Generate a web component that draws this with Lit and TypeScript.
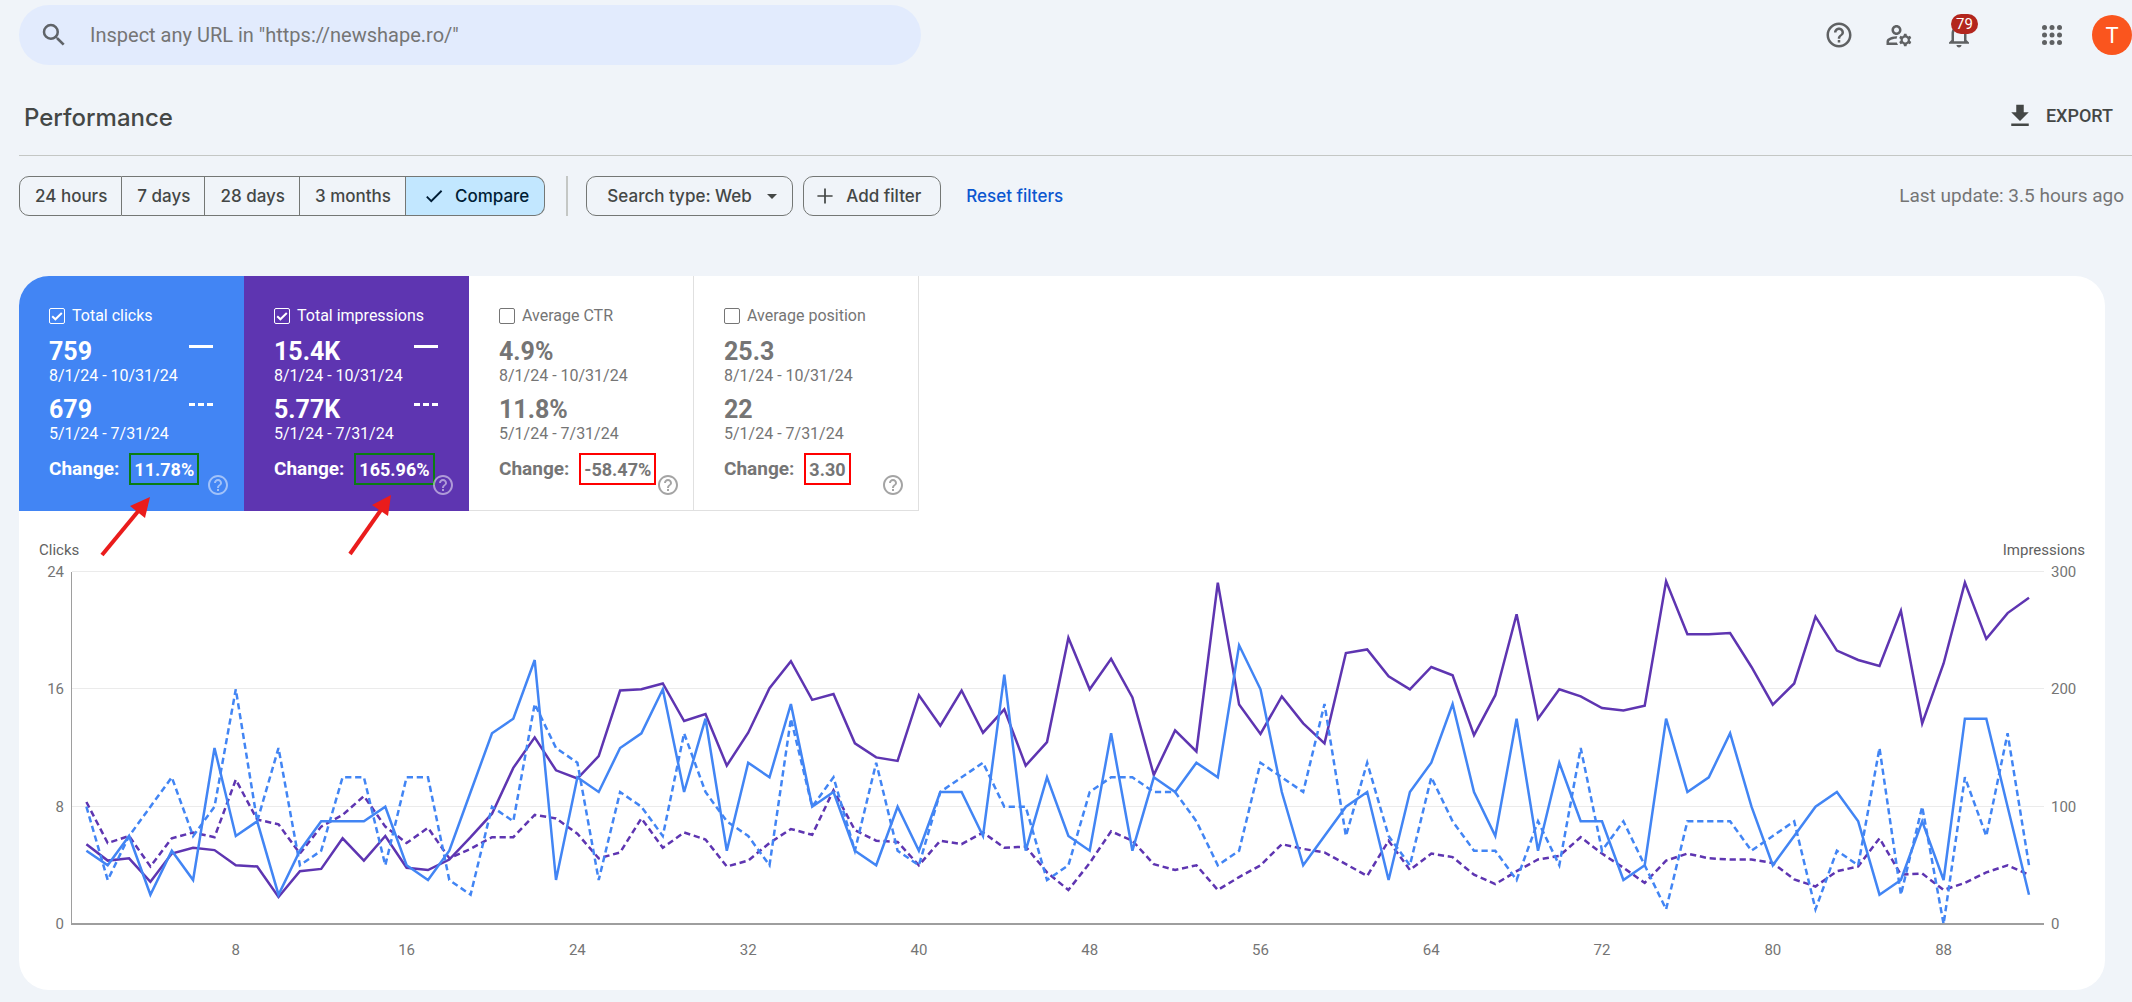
import { LitElement, html, svg, css, nothing } from "lit";
import { customElement, property } from "lit/decorators.js";
import { classMap } from "lit/directives/class-map.js";

const CLICKS = [
  5, 4, 6, 2, 5, 3, 12, 6, 7, 2, 5, 7, 7, 7, 8, 4, 3, 5, 9, 13, 14, 18, 3, 10, 9, 12, 13, 16, 9, 14, 5, 11, 10, 15,
  8, 9, 5, 4, 8, 5, 9, 9, 6, 17, 5, 10, 6, 5, 13, 5, 10, 9, 11, 10, 19, 16, 9, 4, 6, 8, 9, 3, 9, 11, 15, 9, 6, 14,
  5, 11, 7, 7, 3, 4, 14, 9, 10, 13, 8, 4, 6, 8, 9, 7, 2, 3, 7, 3, 14, 14, 8, 2,
];
const CLICKS_PREV = [
  8, 3, 6, 8, 10, 6, 8, 16, 7, 12, 4, 5, 10, 10, 4, 10, 10, 3, 2, 8, 7, 15, 12, 11, 3, 9, 8, 6, 13, 9, 7, 6, 4, 14,
  8, 10, 5, 11, 5, 4, 9, 10, 11, 8, 8, 3, 4, 9, 10, 10, 9, 9, 7, 4, 5, 11, 10, 9, 15, 6, 11, 6, 4, 10, 7, 5, 5, 3,
  7, 4, 12, 5, 7, 4, 1, 7, 7, 7, 5, 6, 7, 1, 5, 4, 12, 2, 8, 0, 10, 6, 13, 4,
];
const IMPRESSIONS = [
  68, 54, 56, 36, 60, 65, 63, 50, 49, 23, 45, 47, 73, 54, 75, 48, 46, 55, 74, 94, 133, 159, 131, 124, 143, 199, 200,
  205, 173, 179, 135, 163, 201, 224, 191, 196, 154, 142, 139, 195, 169, 199, 163, 183, 135, 155, 244, 200, 226, 193,
  127, 165, 147, 291, 187, 162, 194, 171, 154, 231, 234, 211, 200, 219, 212, 161, 195, 264, 175, 200, 194, 184, 182,
  186, 292, 247, 247, 248, 219, 187, 205, 262, 233, 225, 220, 267, 171, 222, 291, 243, 265, 278,
];
const IMPRESSIONS_PREV = [
  104, 69, 75, 49, 73, 78, 74, 123, 89, 85, 60, 83, 93, 109, 83, 69, 82, 56, 64, 74, 74, 93, 90, 77, 56, 61, 90, 65,
  78, 72, 49, 54, 69, 81, 76, 114, 80, 71, 70, 50, 71, 68, 78, 65, 66, 44, 29, 52, 79, 71, 51, 46, 50, 29, 40, 50,
  68, 64, 61, 51, 41, 71, 46, 60, 57, 42, 34, 45, 55, 58, 74, 60, 48, 35, 54, 60, 56, 55, 55, 52, 38, 32, 45, 49,
  73, 42, 43, 29, 35, 44, 50, 42,
];

const icon = (size: number, body: unknown, cls = "") =>
  html`<svg class=${cls} width=${size} height=${size} viewBox="0 0 24 24" fill="currentColor" aria-hidden="true">${body}</svg>`;

const ICONS = {
  search: svg`<path d="M15.5 14h-.79l-.28-.27A6.47 6.47 0 0 0 16 9.5 6.5 6.5 0 1 0 9.5 16c1.61 0 3.09-.59 4.23-1.57l.27.28v.79l5 4.99L20.49 19l-4.99-5zm-6 0a4.5 4.5 0 1 1 0-9 4.5 4.5 0 0 1 0 9z"/>`,
  help: svg`<path d="M11 18h2v-2h-2v2zm1-16C6.48 2 2 6.48 2 12s4.48 10 10 10 10-4.48 10-10S17.52 2 12 2zm0 18c-4.41 0-8-3.59-8-8s3.59-8 8-8 8 3.59 8 8-3.59 8-8 8zm0-14c-2.21 0-4 1.79-4 4h2c0-1.1.9-2 2-2s2 .9 2 2c0 2-3 1.75-3 5h2c0-2.250 3-2.500 3-5 0-2.210-1.790-4-4-4z"/>`,
  manage: svg`<path d="M4 18v-.65c0-.34.16-.66.41-.81C6.100 15.530 8.030 15 10 15c.03 0 .05 0 .08.01.1-.7.3-1.370.59-1.980-.22-.02-.44-.03-.67-.03-2.420 0-4.680.67-6.610 1.820-.88.52-1.390 1.500-1.390 2.530V20h9.260c-.42-.6-.75-1.280-.97-2H4zM10 12c2.210 0 4-1.790 4-4s-1.790-4-4-4-4 1.790-4 4 1.790 4 4 4zm0-6c1.100 0 2 .9 2 2s-.9 2-2 2-2-.9-2-2 .9-2 2-2zM20.750 16c0-.22-.03-.42-.06-.63l1.140-1.010-1-1.730-1.450.49c-.32-.27-.68-.48-1.080-.63L18 11h-2l-.3 1.490c-.4.150-.76.36-1.080.63l-1.450-.49-1 1.730 1.140 1.010c-.03.21-.06.41-.06.63s.03.42.06.63l-1.140 1.010 1 1.730 1.450-.49c.32.27.68.48 1.080.63L16 21h2l.3-1.490c.4-.150.76-.36 1.080-.63l1.450.49 1-1.730-1.140-1.010c.03-.21.06-.41.06-.63zM17 18c-1.100 0-2-.9-2-2s.9-2 2-2 2 .9 2 2-.9 2-2 2z"/>`,
  bell: svg`<path d="M12 22c1.100 0 2-.9 2-2h-4c0 1.100.9 2 2 2zm6-6v-5c0-3.070-1.630-5.640-4.500-6.320V4c0-.83-.67-1.500-1.500-1.500s-1.500.67-1.500 1.500v.68C7.640 5.360 6 7.920 6 11v5l-2 2v1h16v-1l-2-2zm-2 1H8v-6c0-2.480 1.510-4.500 4-4.500s4 2.020 4 4.500v6z"/>`,
  apps: svg`${[6, 12, 18].map((y) => [6, 12, 18].map((x) => svg`<circle cx=${x} cy=${y} r="2"/>`))}`,
  download: svg`<path d="M19 9h-4V3H9v6H5l7 7 7-7zM5 18v2h14v-2H5z"/>`,
  check: svg`<path d="M9 16.170 4.830 12l-1.420 1.410L9 19 21 7l-1.410-1.410z"/>`,
  plus: svg`<path d="M19 12.800h-6.200V19h-1.600v-6.200H5v-1.600h6.200V5h1.600v6.200H19z"/>`,
  down: svg`<path d="M7 10l5 5 5-5z"/>`,
};

interface Metric {
  id: string;
  label: string;
  current: string;
  previous: string;
  change: string;
  tone: string;
  checked: boolean;
}

const METRICS: Metric[] = [
  { id: "clicks", label: "Total clicks", current: "759", previous: "679", change: "11.78%", tone: "blue", checked: true },
  { id: "impressions", label: "Total impressions", current: "15.4K", previous: "5.77K", change: "165.96%", tone: "purple", checked: true },
  { id: "ctr", label: "Average CTR", current: "4.9%", previous: "11.8%", change: "-58.47%", tone: "plain", checked: false },
  { id: "position", label: "Average position", current: "25.3", previous: "22", change: "3.30", tone: "plain", checked: false },
];

@customElement("metric-tile")
export class MetricTile extends LitElement {
  @property({ attribute: false }) metric!: Metric;

  static styles = css`
    :host {
      display: block;
    }
    .tile {
      box-sizing: border-box;
      position: relative;
      height: 100%;
      padding: 29px 30px 25px;
      font-family: Roboto, "Liberation Sans", sans-serif;
      font-size: 16px;
      line-height: 20px;
      color: #757575;
      border-right: 1px solid #e0e0e0;
      border-bottom: 1px solid #e0e0e0;
    }
    .blue {
      background: #4285f4;
      border-color: #4285f4;
      color: #fff;
    }
    .purple {
      background: #5e35b1;
      border-color: #5e35b1;
      color: #fff;
    }
    .label {
      display: flex;
      align-items: center;
      gap: 7px;
      margin-bottom: 11px;
      line-height: 22px;
      white-space: nowrap;
    }
    .box {
      display: grid;
      flex: none;
    }
    .box > * {
      grid-area: 1 / 1;
    }
    .box input {
      appearance: none;
      box-sizing: border-box;
      width: 16px;
      height: 16px;
      margin: 0;
      border: 1px solid currentColor;
      border-radius: 2px;
      color: inherit;
    }
    .tick {
      pointer-events: none;
      place-self: center;
      stroke: currentColor;
      stroke-width: 2;
      fill: none;
    }
    .period {
      margin-bottom: 10px;
    }
    .row {
      display: flex;
      justify-content: space-between;
    }
    .value {
      font-size: 25px;
      line-height: 28px;
      font-weight: 700;
    }
    .sample {
      width: 24px;
      height: 18px;
      stroke: currentColor;
      stroke-width: 3;
    }
    .change {
      display: flex;
      align-items: center;
      gap: 10px;
      margin-top: -1px;
      font-size: 19px;
      font-weight: 700;
      white-space: nowrap;
    }
    .mark {
      box-sizing: border-box;
      height: 32px;
      padding: 0 3px;
      border: 2px solid #f00;
      font-size: 18px;
      line-height: 30px;
    }
    .blue .mark,
    .purple .mark {
      border-color: #0a7d12;
    }
    .help {
      position: absolute;
      right: 13px;
      bottom: 13px;
      display: flex;
      padding: 0;
      border: 0;
      background: none;
      color: inherit;
      opacity: 0.65;
    }
    .blue .help,
    .purple .help {
      opacity: 0.5;
    }
  `;

  private period(value: string, dates: string, dashed: boolean) {
    const m = this.metric;
    return html`<div class="period">
      <div class="row">
        <span class="value">${value}</span>
        ${m.checked
          ? html`<svg class="sample" viewBox="0 0 24 18" aria-hidden="true">
              <path d="M0 8.500H24" stroke-dasharray=${dashed ? "6 3" : "none"} />
            </svg>`
          : nothing}
      </div>
      <div>${dates}</div>
    </div>`;
  }

  render() {
    const m = this.metric;
    return html`<section class=${classMap({ tile: true, [m.tone]: true })}>
      <label class="label">
        <span class="box">
          <input type="checkbox" .checked=${m.checked} />
          ${m.checked
            ? html`<svg class="tick" width="12" height="12" viewBox="0 0 12 12" aria-hidden="true"><path d="M1.200 6.200 4.400 9.300 10.800 3" /></svg>`
            : nothing}
        </span>
        ${m.label}
      </label>
      ${this.period(m.current, "8/1/24 - 10/31/24", false)}
      ${this.period(m.previous, "5/1/24 - 7/31/24", true)}
      <div class="change"><span>Change:</span><span class="mark">${m.change}</span></div>
      <button class="help" type="button" aria-label="Help">${icon(24, ICONS.help)}</button>
    </section>`;
  }
}

@customElement("performance-chart")
export class PerformanceChart extends LitElement {
  static styles = css`
    :host {
      display: block;
      font-family: Roboto, "Liberation Sans", sans-serif;
      font-size: 15px;
    }
    .titles {
      display: flex;
      justify-content: space-between;
      padding: 29px 20px 0;
      line-height: 20px;
      color: #616161;
    }
    .plot {
      display: block;
      width: 100%;
      height: auto;
      font-size: 15px;
    }
    .tick {
      fill: #757575;
    }
    .grid {
      stroke: #ebebeb;
      stroke-width: 1;
    }
    .axis {
      stroke: #9e9e9e;
    }
    .line {
      fill: none;
      stroke-width: 2.5;
      stroke-linejoin: miter;
    }
    .clicks {
      stroke: #4285f4;
    }
    .impressions {
      stroke: #5e35b1;
    }
    .dashed {
      stroke-dasharray: 6.25 3.75;
    }
  `;

  private readonly left = 53;
  private readonly right = 2025;
  private readonly top = 12;
  private readonly base = 364;

  private x(day: number) {
    return 67.4 + (day - 1) * 21.347;
  }

  private y(value: number, max: number) {
    return this.base - (value / max) * (this.base - this.top);
  }

  private line(data: number[], max: number, cls: string) {
    const points = data.map((v, i) => `${this.x(i + 1).toFixed(1)},${this.y(v, max).toFixed(1)}`).join(" ");
    return svg`<polyline class="line ${cls}" points=${points} />`;
  }

  render() {
    return html`
      <div class="titles"><span>Clicks</span><span>Impressions</span></div>
      <svg class="plot" viewBox="0 0 2086 430" role="img" aria-label="Clicks and impressions by day">
        ${[0, 8, 16, 24].map((v) => {
          const y = this.y(v, 24);
          return svg`
            ${v ? svg`<path class="grid" d="M${this.left} ${Math.round(y) - 0.5}H${this.right}" />` : nothing}
            <text class="tick" x="45" y=${y + 5} text-anchor="end">${v}</text>
            <text class="tick" x="2032" y=${y + 5}>${v * 12.5}</text>`;
        })}
        <path class="axis" d="M${this.left - 0.5} ${this.top}V${this.base}" />
        <path class="axis" stroke-width="2" d="M${this.left - 1} ${this.base}H${this.right}" />
        ${this.line(IMPRESSIONS_PREV, 300, "impressions dashed")}
        ${this.line(IMPRESSIONS, 300, "impressions")}
        ${this.line(CLICKS_PREV, 24, "clicks dashed")}
        ${this.line(CLICKS, 24, "clicks")}
        ${[8, 16, 24, 32, 40, 48, 56, 64, 72, 80, 88].map(
          (d) => svg`<text class="tick" x=${this.x(d)} y="395" text-anchor="middle">${d}</text>`
        )}
      </svg>
    `;
  }
}

@customElement("app-root")
export class AppRoot extends LitElement {
  static styles = css`
    :host {
      display: block;
      min-height: 100vh;
      box-sizing: border-box;
      padding: 5px 0 12px 19px;
      background: #f0f4f9;
      color: #444746;
      font-family: Roboto, "Liberation Sans", sans-serif;
    }
    button,
    select,
    input {
      font: inherit;
      color: inherit;
    }
    svg {
      flex: none;
    }
    .top {
      display: flex;
      align-items: center;
      justify-content: space-between;
      height: 60px;
    }
    .search {
      display: flex;
      align-items: center;
      gap: 21px;
      box-sizing: border-box;
      width: 43%;
      max-width: 902px;
      height: 60px;
      padding: 0 20px;
      border-radius: 30px;
      background: #e2ebfd;
      color: #5f6368;
    }
    .search input {
      flex: 1;
      min-width: 0;
      padding: 0;
      border: 0;
      outline: 0;
      background: none;
      font-size: 20px;
    }
    .search input::placeholder {
      color: #757575;
      opacity: 1;
    }
    .tools {
      display: flex;
      align-items: center;
      gap: 30px;
      color: #5f6163;
    }
    .tool {
      position: relative;
      display: flex;
      padding: 0;
      border: 0;
      background: none;
    }
    .apps {
      margin-left: 33px;
    }
    .badge {
      position: absolute;
      left: 7px;
      top: -6px;
      min-width: 27px;
      border-radius: 10px;
      background: #b3261e;
      color: #fff;
      font-size: 15px;
      line-height: 20px;
      text-align: center;
    }
    .avatar {
      width: 40px;
      height: 40px;
      margin-left: -5px;
      padding: 0;
      border: 0;
      border-radius: 50%;
      background: #fa551e;
      color: #fff;
      font-size: 22px;
    }
    .title-row {
      display: flex;
      align-items: center;
      justify-content: space-between;
      height: 91px;
      box-sizing: border-box;
      padding: 15px 19px 4px 5px;
      border-bottom: 1px solid #c4c7c5;
    }
    .title-row h1 {
      margin: 0;
      padding-top: 4px;
      font: 500 24px/32px Inter, Roboto, sans-serif;
    }
    .export {
      display: flex;
      align-items: center;
      gap: 11px;
      padding: 0;
      border: 0;
      background: none;
      font-size: 18px;
      font-weight: 500;
    }
    .filters {
      display: flex;
      align-items: center;
      margin-top: 20px;
      padding-right: 8px;
      font: 500 17px/20px Inter, Roboto, sans-serif;
      white-space: nowrap;
    }
    .segments {
      display: flex;
    }
    .segment {
      display: flex;
      align-items: center;
      justify-content: center;
      gap: 10px;
      box-sizing: border-box;
      height: 40px;
      padding: 0 14px 0 15px;
      border: 1px solid #747775;
      border-left-width: 0;
      background: none;
    }
    .segment:first-child {
      border-left-width: 1px;
      border-radius: 10px 0 0 10px;
    }
    .segment:last-child {
      padding-left: 17px;
      padding-right: 15px;
      border-radius: 0 10px 10px 0;
    }
    .selected {
      background: #c2e7ff;
      color: #001d35;
    }
    .divider {
      width: 2px;
      height: 40px;
      margin: 0 18px 0 21px;
      background: #c4c7c5;
    }
    .chip {
      display: flex;
      align-items: center;
      box-sizing: border-box;
      height: 40px;
      border: 1px solid #747775;
      border-radius: 10px;
      background: none;
    }
    .type {
      display: grid;
      padding: 0;
    }
    .type > * {
      grid-area: 1 / 1;
    }
    .type select {
      appearance: none;
      height: 38px;
      padding: 0 40px 0 20px;
      border: 0;
      border-radius: 10px;
      background: none;
    }
    .type svg {
      place-self: center end;
      margin-right: 8px;
      pointer-events: none;
    }
    .add {
      gap: 8px;
      margin-left: 10px;
      padding: 0 19px 0 8px;
    }
    .reset {
      margin-left: 25px;
      color: #0b57d0;
      text-decoration: none;
    }
    .updated {
      margin-left: auto;
      color: #757575;
      font: 400 19px/20px Roboto, "Liberation Sans", sans-serif;
    }
    .card {
      position: relative;
      margin: 60px 27px 0 0;
      border-radius: 30px;
      background: #fff;
      overflow: hidden;
    }
    .metrics {
      display: grid;
      grid-template-columns: repeat(4, 225px);
    }
    .arrows {
      position: absolute;
      left: 0;
      top: 0;
      width: 450px;
      height: 290px;
      pointer-events: none;
      fill: #ea1c1c;
      stroke: #ea1c1c;
    }
  `;

  render() {
    return html`
      <header class="top">
        <label class="search">
          ${icon(30, ICONS.search)}
          <input type="text" aria-label="Inspect URL" placeholder='Inspect any URL in "https://newshape.ro/"' />
        </label>
        <div class="tools">
          <button class="tool" type="button" aria-label="Help">${icon(30, ICONS.help)}</button>
          <button class="tool" type="button" aria-label="Users and permissions">${icon(30, ICONS.manage)}</button>
          <button class="tool" type="button" aria-label="Notifications">
            ${icon(30, ICONS.bell)}<span class="badge">79</span>
          </button>
          <button class="tool apps" type="button" aria-label="Apps">${icon(30, ICONS.apps)}</button>
          <button class="avatar" type="button">T</button>
        </div>
      </header>
      <div class="title-row">
        <h1>Performance</h1>
        <button class="export" type="button">${icon(30, ICONS.download)}EXPORT</button>
      </div>
      <div class="filters">
        <div class="segments">
          ${["24 hours", "7 days", "28 days", "3 months"].map(
            (t) => html`<button class="segment" type="button" aria-pressed="false">${t}</button>`
          )}
          <button class="segment selected" type="button" aria-pressed="true">${icon(22, ICONS.check)}Compare</button>
        </div>
        <span class="divider"></span>
        <div class="chip type">
          <select aria-label="Search type">
            <option>Search type: Web</option>
          </select>
          ${icon(24, ICONS.down)}
        </div>
        <button class="chip add" type="button">${icon(26, ICONS.plus)}Add filter</button>
        <a class="reset" href="#">Reset filters</a>
        <span class="updated">Last update: 3.5 hours ago</span>
      </div>
      <main class="card">
        <div class="metrics">${METRICS.map((m) => html`<metric-tile .metric=${m}></metric-tile>`)}</div>
        <performance-chart></performance-chart>
        <svg class="arrows" viewBox="0 0 450 290" aria-hidden="true">
          <path d="M83 279 121 233" stroke-width="4" />
          <path d="M131 221 111 230 126 242z" stroke="none" />
          <path d="M331 278 364 231" stroke-width="4" />
          <path d="M372 219 353 229 369 240z" stroke="none" />
        </svg>
      </main>
    `;
  }
}
